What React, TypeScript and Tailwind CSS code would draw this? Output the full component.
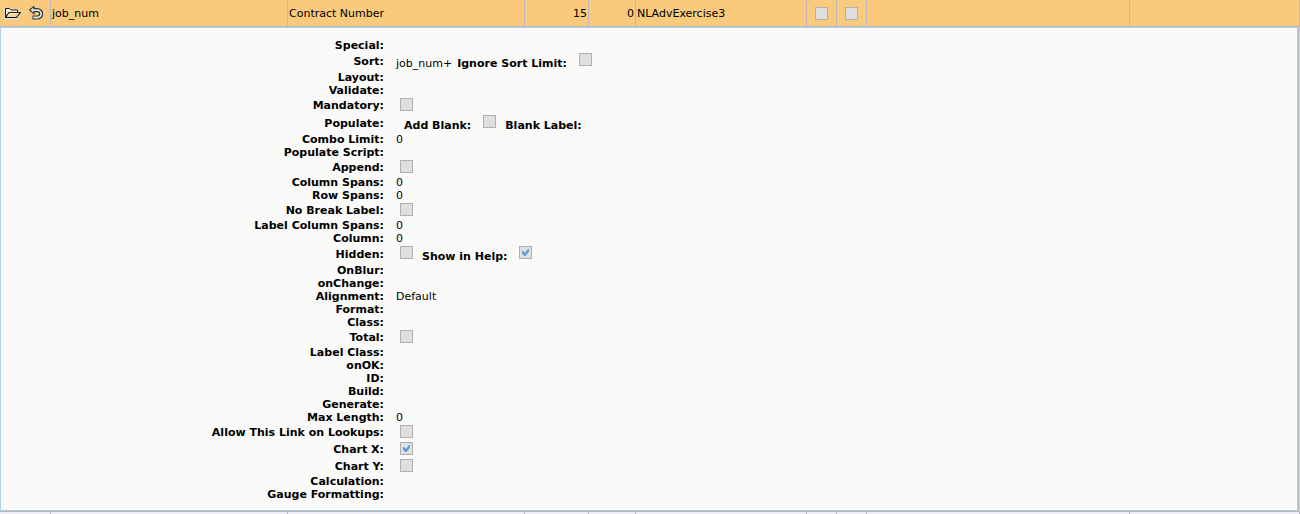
import type { ReactNode } from "react";

type Part =
  | { kind: "text"; text: string }
  | { kind: "check"; label: string; checked?: boolean; hideLabel?: boolean }
  | { kind: "label"; text: string };

type Field = { label: string; size?: "box" | "mixed"; indent?: boolean; parts?: Part[] };

const text = (value: string): Part[] => [{ kind: "text", text: value }];
const box = (label: string, checked = false): Part => ({ kind: "check", label, checked, hideLabel: true });

const fields: Field[] = [
  { label: "Special" },
  {
    label: "Sort",
    size: "mixed",
    parts: [
      { kind: "text", text: "job_num+" },
      { kind: "check", label: "Ignore Sort Limit" },
    ],
  },
  { label: "Layout" },
  { label: "Validate" },
  { label: "Mandatory", size: "box", parts: [box("Mandatory")] },
  {
    label: "Populate",
    size: "mixed",
    indent: true,
    parts: [
      { kind: "check", label: "Add Blank" },
      { kind: "label", text: "Blank Label:" },
    ],
  },
  { label: "Combo Limit", parts: text("0") },
  { label: "Populate Script" },
  { label: "Append", size: "box", parts: [box("Append")] },
  { label: "Column Spans", parts: text("0") },
  { label: "Row Spans", parts: text("0") },
  { label: "No Break Label", size: "box", parts: [box("No Break Label")] },
  { label: "Label Column Spans", parts: text("0") },
  { label: "Column", parts: text("0") },
  {
    label: "Hidden",
    size: "mixed",
    parts: [box("Hidden"), { kind: "check", label: "Show in Help", checked: true }],
  },
  { label: "OnBlur" },
  { label: "onChange" },
  { label: "Alignment", parts: text("Default") },
  { label: "Format" },
  { label: "Class" },
  { label: "Total", size: "box", parts: [box("Total")] },
  { label: "Label Class" },
  { label: "onOK" },
  { label: "ID" },
  { label: "Build" },
  { label: "Generate" },
  { label: "Max Length", parts: text("0") },
  { label: "Allow This Link on Lookups", size: "box", parts: [box("Allow This Link on Lookups")] },
  { label: "Chart X", size: "box", parts: [box("Chart X", true)] },
  { label: "Chart Y", size: "box", parts: [box("Chart Y")] },
  { label: "Calculation" },
  { label: "Gauge Formatting" },
];

const idOf = (label: string) => label.toLowerCase().replace(/\s+/g, "-");

function CheckBox({ id, checked = false, name }: { id?: string; checked?: boolean; name?: string }) {
  return (
    <span className="relative block size-[13px] shrink-0">
      <input
        id={id}
        aria-label={name}
        type="checkbox"
        defaultChecked={checked}
        disabled
        className="peer block size-[13px] appearance-none border border-[#b0b0b0] bg-[#dfdfdf]"
      />
      <svg
        viewBox="0 0 13 13"
        className="pointer-events-none absolute inset-0 hidden size-[13px] peer-checked:block"
        aria-hidden="true"
      >
        <path d="M3 5h1l2 2 3-4h1v2.6L6.4 10h-1L3 7.6Z" fill="#5b9bd5" />
      </svg>
    </span>
  );
}

function FieldRow({ field }: { field: Field }) {
  const height = field.size === "mixed" ? "h-[19px]" : field.size === "box" ? "h-[17px]" : "h-[13px]";
  const drop = field.size === "mixed" ? "pt-[5px]" : "";
  const ownBox = field.parts?.some((p) => p.kind === "check" && p.hideLabel);
  return (
    <div className={`flex ${height}`}>
      <div className="flex w-[383px] shrink-0 items-center justify-end font-bold">
        {ownBox ? <label htmlFor={idOf(field.label)}>{field.label}:</label> : <span>{field.label}:</span>}
      </div>
      <div className={`flex items-start gap-[5px] whitespace-nowrap ${field.indent ? "pl-5" : "pl-3"}`}>
        {field.parts?.map((part, i) => {
          if (part.kind === "check") {
            return (
              <span key={i} className="flex items-start gap-2">
                {!part.hideLabel && (
                  <label htmlFor={idOf(part.label)} className={`font-bold ${drop}`}>
                    {part.label}:
                  </label>
                )}
                <span className="mx-1 pt-px">
                  <CheckBox id={idOf(part.label)} checked={part.checked} />
                </span>
              </span>
            );
          }
          return (
            <span key={i} className={`${drop} ${part.kind === "label" ? "font-bold" : ""}`}>
              {part.text}
            </span>
          );
        })}
      </div>
    </div>
  );
}

function FolderIcon() {
  return (
    <svg viewBox="0 0 18 13" className="h-[13px] w-[18px]" aria-hidden="true">
      <path d="M1 11.5V1.5h5l1.5 1.5H14v2.5h3L13 11.8Z" fill="none" stroke="#e3dccd" strokeWidth="2" />
      <path d="M1.5 10.5v-9h4l1.5 1.5h6.5v2" fill="#fff0d0" stroke="#151515" />
      <path d="M1.5 10.5 5 5.5h11.5l-4 5Z" fill="#fbd28b" stroke="#151515" strokeWidth="1.2" strokeLinejoin="round" />
      <path d="M4 9.5 6 6.6h8.5" fill="none" stroke="#fff5df" />
    </svg>
  );
}

function UndoIcon() {
  return (
    <svg viewBox="0 0 14 14" className="size-[14px]" aria-hidden="true">
      <path d="M3.5 4.2h5a3.6 3.6 0 0 1 0 7.3H3.5" fill="none" stroke="#30363c" strokeWidth="4.2" />
      <path d="M.6 4 5 .4v7.4Z" fill="#d5e2e8" stroke="#30363c" strokeWidth="1.1" />
      <path d="M3 4.2h5.5a3.6 3.6 0 0 1 0 7.3H4.4" fill="none" stroke="#d5e2e8" strokeWidth="1.8" />
    </svg>
  );
}

function Cell({ children, className = "" }: { children?: ReactNode; className?: string }) {
  return (
    <td className={`h-[27px] border-r border-b border-[#b9b9b9] px-px py-0 ${className}`}>{children}</td>
  );
}

export default function App() {
  return (
    <main className="bg-[#f0eff9] font-['DejaVu_Sans',Verdana,sans-serif] text-[11px] leading-[13px] text-black">
      <table className="w-full table-fixed border-separate border-spacing-0">
        <colgroup>
          <col className="w-[51px]" />
          <col className="w-[237px]" />
          <col className="w-[237px]" />
          <col className="w-16" />
          <col className="w-[47px]" />
          <col className="w-[171px]" />
          <col className="w-[30px]" />
          <col className="w-[30px]" />
          <col className="w-[263px]" />
          <col />
        </colgroup>
        <tbody>
          <tr className="bg-[#f9ca7b]">
            <Cell>
              <div className="flex items-center gap-[7px] pl-[3px]">
                <button type="button" aria-label="Open">
                  <FolderIcon />
                </button>
                <button type="button" aria-label="Undo">
                  <UndoIcon />
                </button>
              </div>
            </Cell>
            <Cell>job_num</Cell>
            <Cell>Contract Number</Cell>
            <Cell className="text-right">15</Cell>
            <Cell className="text-right">0</Cell>
            <Cell>NLAdvExercise3</Cell>
            <Cell>
              <div className="flex justify-center">
                <CheckBox name="First option" />
              </div>
            </Cell>
            <Cell>
              <div className="flex justify-center">
                <CheckBox name="Second option" />
              </div>
            </Cell>
            <Cell />
            <Cell />
          </tr>
          <tr>
            <td colSpan={10} className="border-r border-b border-r-[#c5d5e8] border-b-[#b9b9b9] p-0">
              <div className="border-r border-[#b9b9b9]">
                <div className="border border-[#b0cdec] bg-[#fafaf8] pt-[11px] pb-[9px]">
                  {fields.map((field) => (
                    <FieldRow key={field.label} field={field} />
                  ))}
                </div>
              </div>
            </td>
          </tr>
          <tr>
            {Array.from({ length: 10 }, (_, i) => (
              <td key={i} className="h-0.5 border-r border-[#b9b9b9] p-0" />
            ))}
          </tr>
        </tbody>
      </table>
    </main>
  );
}
